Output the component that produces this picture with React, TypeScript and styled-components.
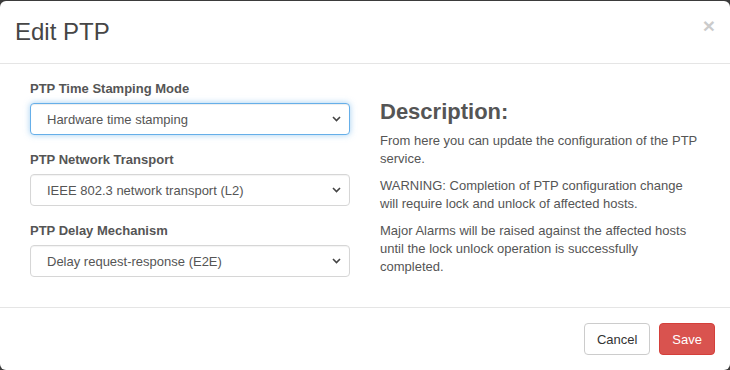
import styled, { createGlobalStyle } from "styled-components";

const GlobalStyle = createGlobalStyle`
  html, body {
    margin: 0;
    padding: 0;
    background: #3b3b3b;
    font-family: "Liberation Sans", Arial, sans-serif;
  }
  * {
    box-sizing: border-box;
  }
`;

const Backdrop = styled.div`
  width: 730px;
  height: 370px;
  padding-top: 1px;
`;

const Modal = styled.div`
  background: #fff;
  border-radius: 6px;
  overflow: hidden;
`;

const Header = styled.div`
  display: flex;
  justify-content: space-between;
  align-items: flex-start;
  padding: 15px 15px 15px 15px;
  border-bottom: 1px solid #e5e5e5;
`;

const Title = styled.h4`
  margin: 0;
  font-size: 24px;
  line-height: 32px;
  font-weight: normal;
  color: #464646;
`;

const CloseButton = styled.button`
  background: transparent;
  border: none;
  padding: 0;
  margin-top: 0;
  font-family: "Liberation Sans", Arial, sans-serif;
  font-size: 21px;
  font-weight: bold;
  line-height: 20px;
  color: #000;
  opacity: 0.2;
  cursor: pointer;
`;

const Body = styled.div`
  display: grid;
  grid-template-columns: 1fr 1fr;
  padding: 16px 15px 15px;
`;

const Column = styled.div`
  padding: 0 15px;
`;

const FormGroup = styled.div`
  margin-bottom: 16px;
  &:last-child {
    margin-bottom: 15px;
  }
`;

const Label = styled.label`
  display: block;
  font-size: 13px;
  line-height: 18px;
  font-weight: bold;
  color: #555;
  margin-bottom: 5px;
`;

const SelectWrap = styled.div`
  position: relative;
`;

const Select = styled.select<{ $focused?: boolean }>`
  display: block;
  width: 100%;
  height: 32px;
  appearance: none;
  -webkit-appearance: none;
  padding: 0 30px 0 16px;
  font-family: "Liberation Sans", Arial, sans-serif;
  font-size: 13px;
  color: #555;
  background: #fff;
  border: 1px solid ${(p) => (p.$focused ? "#66afe9" : "#d6d6d6")};
  border-radius: 4px;
  box-shadow: ${(p) =>
    p.$focused
      ? "inset 0 1px 1px rgba(0,0,0,.075), 0 0 6px rgba(102,175,233,.6)"
      : "inset 0 1px 1px rgba(0,0,0,.05)"};
  outline: none;
`;

const Chevron = styled.svg`
  position: absolute;
  right: 9px;
  top: 13px;
  pointer-events: none;
`;

const Heading = styled.h3`
  margin: 20px 0 8px;
  font-size: 22px;
  line-height: 24px;
  font-weight: bold;
  color: #555;
`;

const Paragraph = styled.p`
  margin: 0 0 9px;
  font-size: 13px;
  line-height: 18px;
  color: #555;
`;

const Footer = styled.div`
  display: flex;
  justify-content: flex-end;
  gap: 9px;
  padding: 15px;
  border-top: 1px solid #e5e5e5;
`;

const Button = styled.button<{ $variant?: "danger" | "default" }>`
  height: 32px;
  padding: 0 12px;
  font-family: "Liberation Sans", Arial, sans-serif;
  font-size: 13px;
  border-radius: 4px;
  cursor: pointer;
  color: ${(p) => (p.$variant === "danger" ? "#fff" : "#333")};
  background: ${(p) => (p.$variant === "danger" ? "#d9534f" : "#fff")};
  border: 1px solid ${(p) => (p.$variant === "danger" ? "#d43f3a" : "#ccc")};
`;

const fields = [
  { label: "PTP Time Stamping Mode", value: "Hardware time stamping", focused: true },
  { label: "PTP Network Transport", value: "IEEE 802.3 network transport (L2)" },
  { label: "PTP Delay Mechanism", value: "Delay request-response (E2E)" },
];

function ChevronIcon() {
  return (
    <Chevron width="9" height="6" viewBox="0 0 9 6">
      <path d="M1 1l3.5 3.5L8 1" fill="none" stroke="#444" strokeWidth="1.6" />
    </Chevron>
  );
}

export default function App() {
  return (
    <Backdrop>
      <GlobalStyle />
      <Modal>
        <Header>
          <Title>Edit PTP</Title>
          <CloseButton>×</CloseButton>
        </Header>
        <Body>
          <Column>
            {fields.map((f) => (
              <FormGroup key={f.label}>
                <Label>{f.label}</Label>
                <SelectWrap>
                  <Select $focused={f.focused} defaultValue={f.value}>
                    <option>{f.value}</option>
                  </Select>
                  <ChevronIcon />
                </SelectWrap>
              </FormGroup>
            ))}
          </Column>
          <Column>
            <Heading>Description:</Heading>
            <Paragraph>
              From here you can update the configuration of the PTP service.
            </Paragraph>
            <Paragraph>
              WARNING: Completion of PTP configuration change will require lock
              and unlock of affected hosts.
            </Paragraph>
            <Paragraph>
              Major Alarms will be raised against the affected hosts until the
              lock unlock operation is successfully completed.
            </Paragraph>
          </Column>
        </Body>
        <Footer>
          <Button>Cancel</Button>
          <Button $variant="danger">Save</Button>
        </Footer>
      </Modal>
    </Backdrop>
  );
}
